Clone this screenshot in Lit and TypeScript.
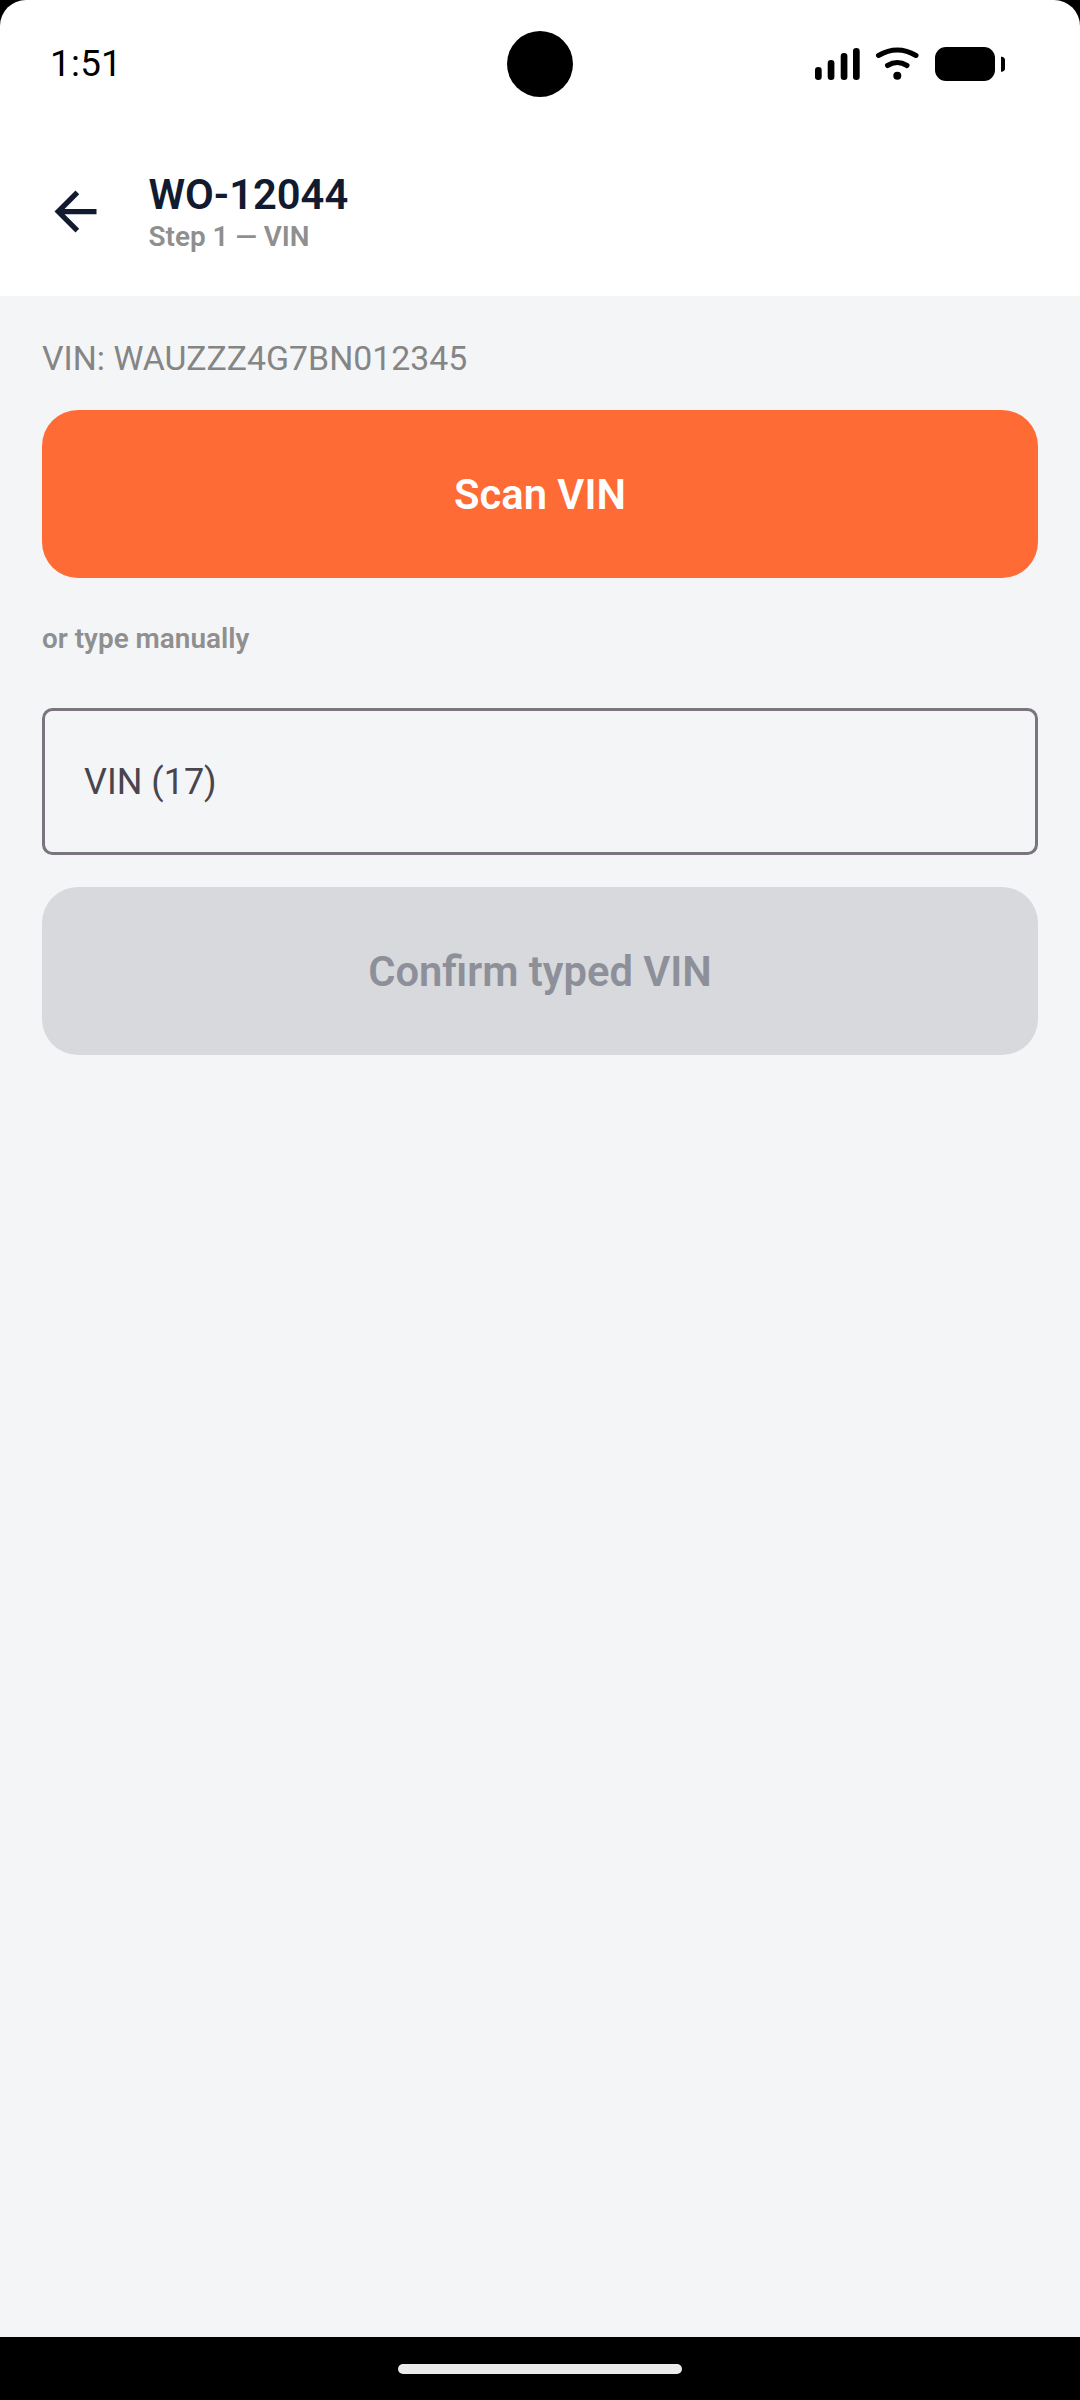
import { LitElement, html, css } from "lit";
import { customElement } from "lit/decorators.js";

@customElement("app-root")
export class AppRoot extends LitElement {
  static styles = css`
    :host {
      display: block;
      width: 1080px;
      height: 2400px;
      background: #000;
      font-family: Roboto, "Liberation Sans", sans-serif;
    }
    .phone {
      height: 2400px;
      display: flex;
      flex-direction: column;
      position: relative;
    }
    .top {
      background: #fff;
      border-radius: 26px 26px 0 0;
      height: 296px;
      flex: none;
      display: flex;
      flex-direction: column;
    }
    .status {
      height: 126px;
      box-sizing: border-box;
      flex: none;
      display: flex;
      align-items: center;
      justify-content: space-between;
      padding: 2px 75px 0 50px;
    }
    .time {
      font-size: 36.75px;
      line-height: 1;
      color: #000;
      letter-spacing: 0.3px;
    }
    .status-icons {
      display: block;
    }
    .camera {
      position: absolute;
      left: 507px;
      top: 30.5px;
      width: 66px;
      height: 66px;
      border-radius: 50%;
      background: #000;
    }
    .appbar {
      flex: 1;
      display: flex;
      align-items: center;
      padding: 3px 0 0 43.5px;
      gap: 42px;
    }
    .back {
      display: block;
      flex: none;
      fill: #111a2e;
      margin-top: -3px;
    }
    .titles {
      display: flex;
      flex-direction: column;
    }
    .title {
      font-size: 41.7px;
      line-height: 48px;
      font-weight: 600;
      color: #111a2e;
    }
    .sub {
      font-size: 27.9px;
      line-height: 34px;
      font-weight: 600;
      color: #8f8f8f;
      margin-top: 1px;
    }
    .content {
      flex: 1;
      background: #f4f5f7;
      padding: 43px 42px 0;
      display: flex;
      flex-direction: column;
    }
    .vin {
      font-size: 33.8px;
      line-height: 40px;
      color: #858585;
      height: 71px;
    }
    .btn {
      height: 168px;
      flex: none;
      border-radius: 36px;
      display: flex;
      align-items: center;
      justify-content: center;
      font-size: 41.7px;
      font-weight: 600;
    }
    .primary {
      background: #ff6b35;
      color: #fff;
    }
    .disabled {
      background: #d8d9dd;
      color: #8d9099;
      margin-top: 32px;
    }
    .or {
      font-size: 27.9px;
      line-height: 34px;
      font-weight: 600;
      color: #8f8f8f;
      margin-top: 44px;
    }
    .field {
      margin-top: 52px;
      height: 147px;
      box-sizing: border-box;
      border: 3px solid #79747e;
      border-radius: 10.5px;
      display: flex;
      align-items: center;
      padding-left: 39px;
      font-size: 36px;
      color: #49454f;
    }
    .nav {
      height: 63px;
      flex: none;
      background: #000;
      display: flex;
      justify-content: center;
      padding-top: 27px;
      box-sizing: border-box;
    }
    .handle {
      width: 284px;
      height: 10px;
      border-radius: 5px;
      background: #ebebeb;
    }
  `;

  render() {
    return html`
      <div class="phone">
        <div class="top">
          <div class="status">
            <span class="time">1:51</span>
            <svg class="status-icons" width="190" height="34" viewBox="0 0 190 34" fill="#000">
              <rect x="0" y="20" width="6.7" height="13" rx="3.2"/>
              <rect x="12.7" y="13" width="6.7" height="20" rx="3.2"/>
              <rect x="25.7" y="6" width="6.7" height="27" rx="3.2"/>
              <rect x="38" y="1" width="6.7" height="32" rx="3.2"/>
              <path d="M63.5 8.5 Q82.3 -2.5 101 8.5" fill="none" stroke="#000" stroke-width="5" stroke-linecap="round"/>
              <path d="M72.5 18.5 Q82.3 12.5 92 18.5" fill="none" stroke="#000" stroke-width="5" stroke-linecap="round"/>
              <circle cx="82.3" cy="28.7" r="4"/>
              <rect x="120" y="0" width="60" height="34" rx="11"/>
              <path d="M186 9.7 L187 9.7 Q190 10.5 190 13 L190 21.5 Q190 24 187 24.7 L186 24.7 Z"/>
            </svg>
          </div>
          <div class="appbar">
            <svg class="back" width="63" height="63" viewBox="0 0 24 24">
              <path d="M20 11H7.83l5.59-5.59L12 4l-8 8 8 8 1.41-1.41L7.83 13H20v-2z"/>
            </svg>
            <div class="titles">
              <span class="title">WO-12044</span>
              <span class="sub">Step 1 — VIN</span>
            </div>
          </div>
        </div>
        <div class="camera"></div>
        <div class="content">
          <div class="vin">VIN: WAUZZZ4G7BN012345</div>
          <div class="btn primary">Scan VIN</div>
          <div class="or">or type manually</div>
          <div class="field">VIN (17)</div>
          <div class="btn disabled">Confirm typed VIN</div>
        </div>
        <div class="nav"><div class="handle"></div></div>
      </div>
    `;
  }
}
